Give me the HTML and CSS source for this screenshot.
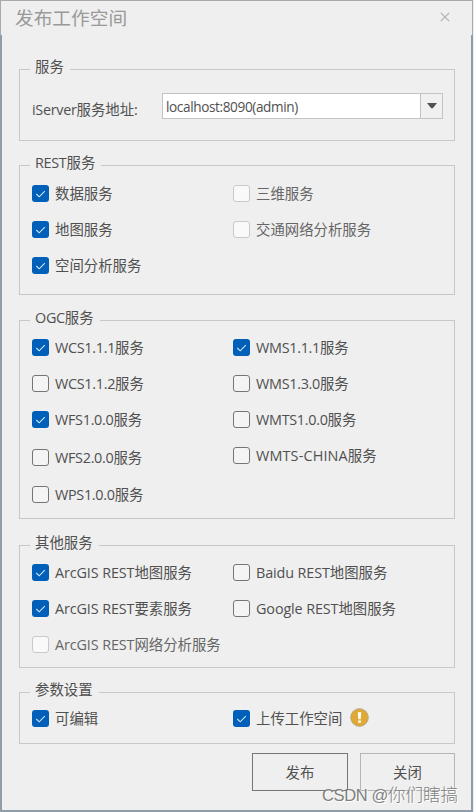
FILE: index.html
```
<!DOCTYPE html>
<html lang="zh-Hans">
<head>
    <meta charset="UTF-8">
    <title>发布工作空间</title>
    <link rel="stylesheet" href="styles.css">
</head>
<body>
    <div class="dialog">
        <div class="title-bar">
            <h1>发布工作空间</h1>
            <svg class="close" width="10" height="10" viewBox="0 0 10 10"><path d="M0.8 0.8L9.2 9.2M9.2 0.8L0.8 9.2"/></svg>
        </div>

        <div class="content">
            <fieldset class="group service">
                <legend>服务</legend>
                <div class="address">
                    <span class="address-label"><span class="en">iServer</span>服务地址:</span>
                    <div class="combo">
                        <span class="combo-text">localhost:8090(admin)</span>
                        <span class="combo-arrow"><svg width="10" height="6" viewBox="0 0 10 6"><path d="M0 0H10L5.8 5.2H4.2Z"/></svg></span>
                    </div>
                </div>
            </fieldset>

            <fieldset class="group rest">
                <legend><span class="en">REST</span>服务</legend>
                <div class="columns">
                    <div class="column">
                        <label class="item checked"><i class="box"></i>数据服务</label>
                        <label class="item checked"><i class="box"></i>地图服务</label>
                        <label class="item checked"><i class="box"></i>空间分析服务</label>
                    </div>
                    <div class="column">
                        <label class="item disabled"><i class="box"></i>三维服务</label>
                        <label class="item disabled"><i class="box"></i>交通网络分析服务</label>
                    </div>
                </div>
            </fieldset>

            <fieldset class="group ogc">
                <legend><span class="en">OGC</span>服务</legend>
                <div class="columns">
                    <div class="column five-rows">
                        <label class="item checked"><i class="box"></i><span class="en">WCS1.1.1</span>服务</label>
                        <label class="item"><i class="box"></i><span class="en">WCS1.1.2</span>服务</label>
                        <label class="item checked"><i class="box"></i><span class="en">WFS1.0.0</span>服务</label>
                        <label class="item"><i class="box"></i><span class="en">WFS2.0.0</span>服务</label>
                        <label class="item"><i class="box"></i><span class="en">WPS1.0.0</span>服务</label>
                    </div>
                    <div class="column">
                        <label class="item checked"><i class="box"></i><span class="en">WMS1.1.1</span>服务</label>
                        <label class="item"><i class="box"></i><span class="en">WMS1.3.0</span>服务</label>
                        <label class="item"><i class="box"></i><span class="en">WMTS1.0.0</span>服务</label>
                        <label class="item"><i class="box"></i><span class="en loose">WMTS-CHINA</span>服务</label>
                    </div>
                </div>
            </fieldset>

            <fieldset class="group other">
                <legend>其他服务</legend>
                <div class="columns">
                    <div class="column">
                        <label class="item checked"><i class="box"></i><span class="en">ArcGIS REST</span>地图服务</label>
                        <label class="item checked"><i class="box"></i><span class="en">ArcGIS REST</span>要素服务</label>
                        <label class="item disabled"><i class="box"></i><span class="en">ArcGIS REST</span>网络分析服务</label>
                    </div>
                    <div class="column">
                        <label class="item"><i class="box"></i><span class="en">Baidu REST</span>地图服务</label>
                        <label class="item"><i class="box"></i><span class="en">Google REST</span>地图服务</label>
                    </div>
                </div>
            </fieldset>

            <fieldset class="group params">
                <legend>参数设置</legend>
                <div class="columns">
                    <div class="column">
                        <label class="item checked"><i class="box"></i>可编辑</label>
                    </div>
                    <div class="column">
                        <label class="item checked"><i class="box"></i>上传工作空间
                            <svg class="warn" width="19" height="19" viewBox="0 0 19 19">
                                <circle cx="9.5" cy="9.5" r="8.8"/>
                                <path d="M7.8 4.2H11.2L10.7 11.2H8.3ZM8.1 12.4H10.9V14.8H8.1Z"/>
                            </svg>
                        </label>
                    </div>
                </div>
            </fieldset>

            <div class="buttons">
                <button class="default">发布</button>
                <button>关闭</button>
            </div>
        </div>

        <div class="watermark"><span>CSDN @</span>你们瞎搞</div>
    </div>

    <script>
        // tick mark for every checked box
        document.querySelectorAll(".checked .box").forEach(box => {
            box.innerHTML = '<svg width="17" height="17" viewBox="0 0 17 17"><path d="M4.3 9L7.2 11.8L12.8 6.1"/></svg>';
        });
    </script>
</body>
</html>
```
FILE: styles.css
```
* {
    box-sizing: border-box;
}

body {
    margin: 0;
    background: #efefef;
    font-family: "Open Sans", "Noto Sans CJK SC", sans-serif;
    font-size: 14.4px;
    color: #505050;
}

.dialog {
    position: relative;
    width: 473px;
    height: 812px;
    display: flex;
    flex-direction: column;
    background: #efefef;
    overflow: hidden;
}

.title-bar {
    display: flex;
    justify-content: space-between;
    height: 35px;
    padding: 0 22px 0 14px;
    border: 1px solid #aaa;
    border-bottom: none;
}

h1 {
    margin: 0;
    font-size: 18.7px;
    font-weight: 400;
    line-height: 34px;
    color: #999;
}

.close {
    margin-top: 11px;
    fill: none;
    stroke: #b0b0b0;
    stroke-width: 1.2;
}

.content {
    flex: 1;
    padding: 25px 16px 0 17px;
    border: 2px solid #8f9ca9;
    border-top: none;
}

.group {
    min-width: 0;
    margin: 0;
    padding: 0 0 0 12px;
    border: 1px solid #c8c8c8;
}

legend {
    height: 18px;
    margin-left: -2px;
    padding: 0 6px 4px 5px;
    line-height: 14px;
}

.en {
    letter-spacing: -0.3px;
}

.other .en {
    letter-spacing: -0.12px;
}

.en.loose {
    letter-spacing: 0.15px;
}

.service {
    height: 81px;
}

.rest {
    height: 139px;
    margin-top: 15px;
}

.ogc {
    height: 208px;
    margin-top: 16px;
}

.other {
    height: 132px;
    margin-top: 17px;
}

.params {
    height: 61px;
    margin-top: 15px;
}

.address {
    display: flex;
    align-items: flex-start;
    padding-top: 15px;
}

.address-label {
    width: 130px;
    padding-top: 8px;
    line-height: 18px;
}

.combo {
    display: flex;
    width: 281px;
    height: 26px;
    border: 1px solid #c4c4c4;
    background: #fff;
    font-size: 13.6px;
    line-height: 25px;
}

.combo-text {
    flex: 1;
    padding-left: 3px;
    letter-spacing: -0.38px;
}

.combo-arrow {
    display: flex;
    align-items: center;
    justify-content: center;
    width: 22px;
    border-left: 1px solid #c4c4c4;
    background: #f0f0f0;
}

.combo-arrow path {
    fill: #505050;
}

.columns {
    display: flex;
    padding-top: 10px;
}

.rest .columns {
    padding-top: 11px;
}

.params .columns {
    padding-top: 9px;
}

.column {
    display: flex;
    flex-direction: column;
    gap: 19px;
    width: 201px;
}

.column.five-rows {
    display: grid;
    grid-template-rows: 36px 36px 38px 37px 17px;
    gap: 0;
}

.item {
    display: flex;
    align-items: center;
    height: 17px;
    line-height: 17px;
    white-space: nowrap;
}

.box {
    width: 17px;
    height: 17px;
    margin-right: 6px;
    border: 1px solid #757575;
    border-radius: 3px;
    background: #f4f4f4;
}

.checked .box {
    border: none;
    background: #005fb8;
}

.box svg {
    display: block;
    fill: none;
    stroke: #d5e6f6;
    stroke-width: 1.1;
}

.disabled {
    color: #666;
}

.disabled .box {
    border-color: #c9c9c9;
    background: #f9f9f9;
}

.warn {
    margin: 0 0 2px 8px;
}

.warn circle {
    fill: #dfa935;
    stroke: #b9a77c;
}

.warn path {
    fill: #fff;
}

.buttons {
    display: flex;
    justify-content: flex-end;
    gap: 12px;
    margin-top: 9px;
}

button {
    width: 95px;
    height: 38px;
    padding: 0 0 2px;
    border: 1px solid #b5b5b5;
    background: #efefef;
    font: inherit;
    color: inherit;
}

button.default {
    width: 96px;
    border-color: #757575;
}

.watermark {
    position: absolute;
    left: 322px;
    top: 782px;
    font-size: 17.6px;
    font-weight: 300;
    line-height: 24px;
    white-space: nowrap;
    color: #808080;
    text-shadow: 1px 1px 0 #fff;
}

.watermark span {
    font-family: "Liberation Sans", sans-serif;
    font-size: 16.6px;
    letter-spacing: -0.45px;
}
```
